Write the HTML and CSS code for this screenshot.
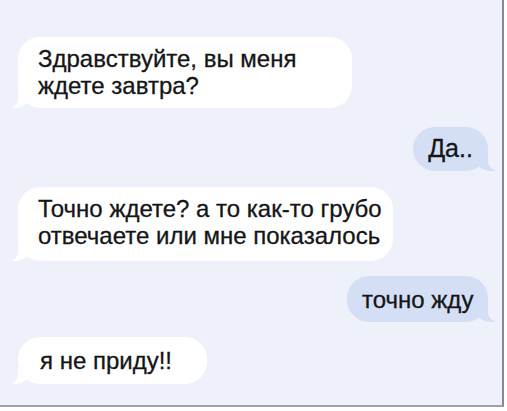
FILE: index.html
```html
<!DOCTYPE html>
<html lang="ru">

<head>
    <meta charset="UTF-8">
    <meta name="viewport" content="width=device-width, initial-scale=1.0">
    <title>Переписка</title>
    <link rel="stylesheet" href="styles.css">
</head>

<body>
    <div class="screen">
        <div class="chat">
            <div class="msg in first">Здравствуйте, вы меня<br>ждете завтра?</div>
            <div class="msg out yes">Да..</div>
            <div class="msg in second">Точно ждете? а то как-то грубо<br>отвечаете или мне показалось</div>
            <div class="msg out sure">точно жду</div>
            <div class="msg in last">я не приду!!</div>
        </div>
    </div>
</body>

</html>
```

FILE: styles.css
```css
body {
    margin: 0;
    background-color: #ffffff;
    font-family: "Liberation Sans", Arial, sans-serif;
}

.screen {
    width: 502px;
    height: 405px;
    background-color: #eef0fa;
    border-right: 2px solid #8a8a8e;
    border-bottom: 2px solid #a0a0a6;
}

.chat {
    display: flex;
    flex-direction: column;
    padding: 37px 14px 0 18px;
}

.msg {
    position: relative;
    box-sizing: border-box;
    font-size: 24px;
    line-height: 27px;
    color: #151517;
    -webkit-text-stroke: 0.3px #151517;
    border-radius: 22px;
    padding: 8px 20px 9px 20px;
    white-space: nowrap;
}

/* incoming: white bubble, tail bottom-left */
.msg.in {
    align-self: flex-start;
    background-color: #ffffff;
}

.msg.in::before {
    content: "";
    position: absolute;
    bottom: 0;
    left: -6px;
    width: 18px;
    height: 16px;
    background-color: #ffffff;
    border-bottom-right-radius: 14px;
}

.msg.in::after {
    content: "";
    position: absolute;
    bottom: 0;
    left: -9px;
    width: 9px;
    height: 16px;
    background-color: #eef0fa;
    border-bottom-right-radius: 9px;
}

/* outgoing: pale blue bubble, tail bottom-right */
.msg.out {
    align-self: flex-end;
    background-color: #d4dff5;
}

.msg.out::before {
    content: "";
    position: absolute;
    bottom: 0;
    right: -7px;
    width: 20px;
    height: 18px;
    background-color: #d4dff5;
    border-bottom-left-radius: 15px;
}

.msg.out::after {
    content: "";
    position: absolute;
    bottom: 0;
    right: -10px;
    width: 10px;
    height: 18px;
    background-color: #eef0fa;
    border-bottom-left-radius: 10px;
}

.msg.first {
    width: 334px;
}

.msg.yes {
    margin-top: 19px;
    width: 75px;
    padding: 8px 0 9px 0;
    text-align: center;
    font-size: 25px;
}

.msg.second {
    margin-top: 16px;
    width: 375px;
    padding-bottom: 12px;
}

.msg.sure {
    margin-top: 15px;
    width: 141px;
    padding: 10px 0 9px 15px;
}

.msg.last {
    margin-top: 15px;
    width: 189px;
    padding-top: 10px;
    padding-bottom: 10px;
    padding-left: 22px;
}
```
